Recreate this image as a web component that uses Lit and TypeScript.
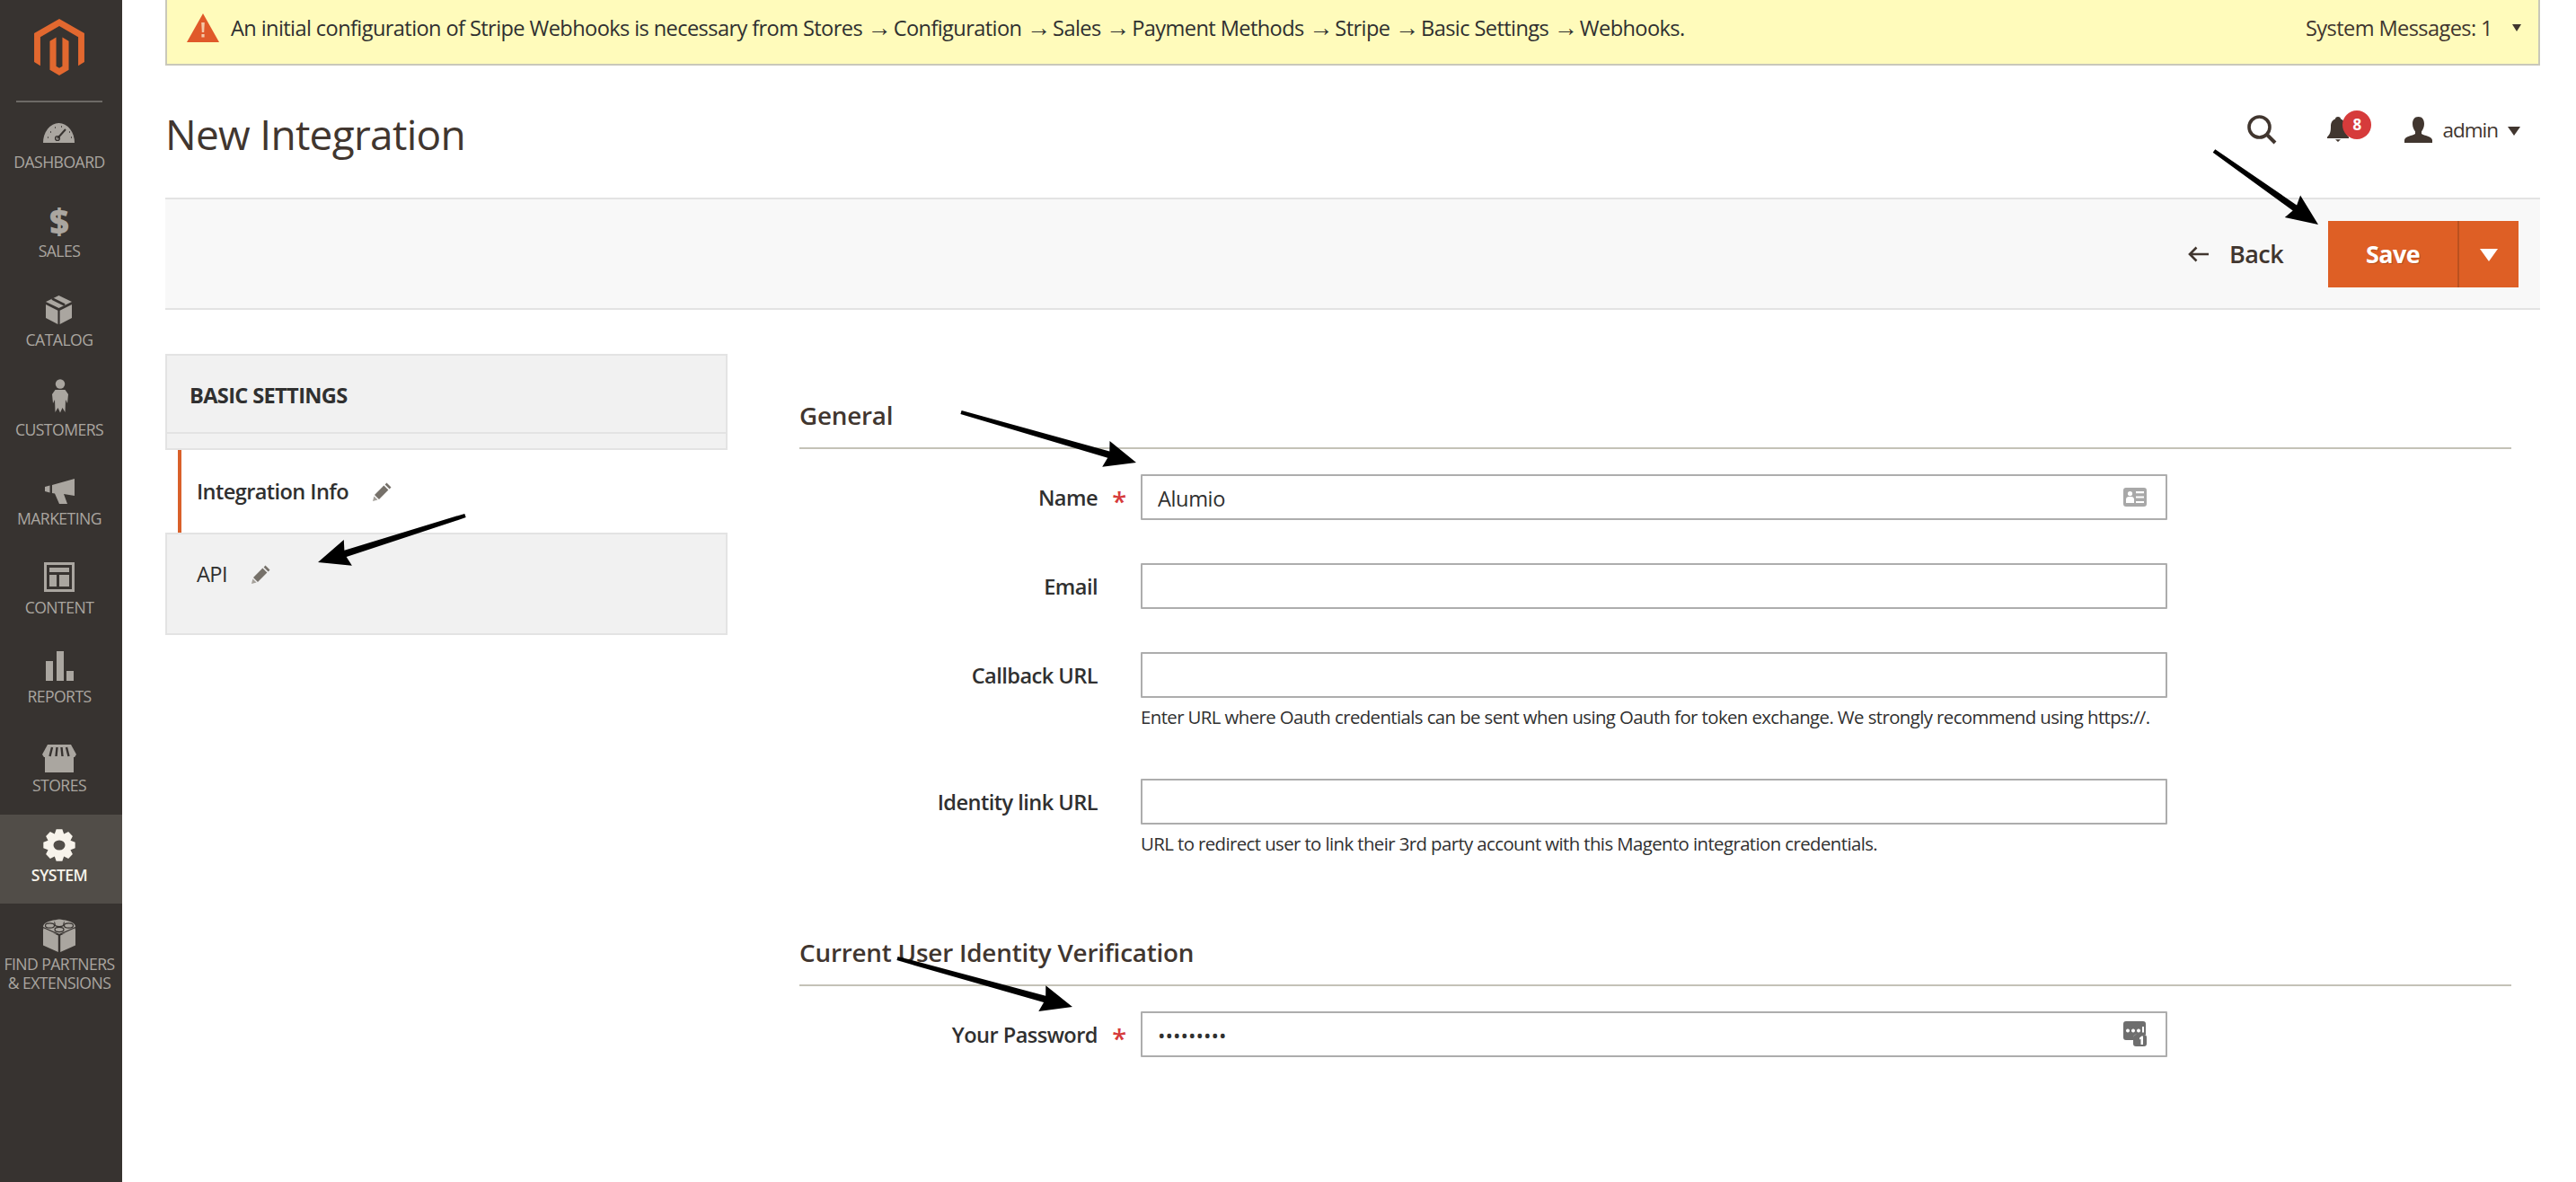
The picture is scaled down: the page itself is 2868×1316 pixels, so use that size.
import { LitElement, css, html, svg } from 'lit';
import { customElement } from 'lit/decorators.js';

// gear outline for the System entry
const gearPath = (cx: number, cy: number, outer: number, inner: number, teeth: number) => {
  const pts: string[] = [];
  const step = (Math.PI * 2) / teeth;
  for (let i = 0; i < teeth; i++) {
    const a = i * step - Math.PI / 2;
    [
      [inner, -0.5],
      [outer, -0.24],
      [outer, 0.24],
      [inner, 0.5],
    ].forEach(([r, k]) => {
      const t = a + k * step;
      pts.push(`${(cx + r * Math.cos(t)).toFixed(2)} ${(cy + r * Math.sin(t)).toFixed(2)}`);
    });
  }
  return `M${pts.join('L')}Z`;
};

const arrowPath = (x1: number, y1: number, x2: number, y2: number) => {
  const len = Math.hypot(x2 - x1, y2 - y1);
  const ux = (x2 - x1) / len;
  const uy = (y2 - y1) / len;
  const nx = -uy;
  const ny = ux;
  const p = (along: number, side: number) =>
    `${(x1 + ux * along + nx * side).toFixed(1)} ${(y1 + uy * along + ny * side).toFixed(1)}`;
  const neck = len - 32;
  return `M${p(0, -2.2)}L${p(neck, -3.8)}L${p(neck - 3, -15)}L${p(len, 0)}L${p(neck - 3, 15)}L${p(neck, 3.8)}L${p(0, 2.2)}Z`;
};

const ARROWS = [
  [2465, 168, 2581, 250],
  [1070, 459, 1265, 515],
  [518, 574, 354, 626],
  [999, 1067, 1194, 1121],
];

const DARK = '#373330';

const PATH_STEPS = ['Stores', 'Configuration', 'Sales', 'Payment Methods', 'Stripe', 'Basic Settings', 'Webhooks.'];

const MENU = [
  {
    label: 'DASHBOARD',
    icon: svg`<path d="M6 36A17.5 22 0 0 1 41 36Z" />
      <path d="M22 31L31 21" stroke="${DARK}" stroke-width="2" />
      <circle cx="22" cy="31" r="2.4" fill="none" stroke="${DARK}" stroke-width="1.4" />
      <path d="M11 30h1M14 24h1M19 19h1M26 18h1M35 24h1M37 30h1" stroke="${DARK}" stroke-width="1.6" />`,
  },
  {
    label: 'SALES',
    glyph: '$',
  },
  {
    label: 'CATALOG',
    icon: svg`<path d="M23.5 8L38 15L23.5 22L9 15Z" />
      <path d="M16 11.5L30 18.5" stroke="${DARK}" stroke-width="2.6" />
      <path d="M9 18L22.4 24.8V40L9 33ZM38 18L24.6 24.8V40L38 33Z" />`,
  },
  {
    label: 'CUSTOMERS',
    icon: svg`<circle cx="25" cy="6.5" r="5.2" />
      <path d="M19.5 13H30.5L34 18L33 28L31 24L30.5 38L27.5 33L25 38.5L22.5 33L19.5 38L19 24L17 28L16 18Z" />`,
  },
  {
    label: 'MARKETING',
    icon: svg`<path d="M8 22L13.5 20.5V28.5L8 27Z" />
      <path d="M16 20L41 13V32L29 30L33 41H24L19 29.5L16 29Z" />`,
  },
  {
    label: 'CONTENT',
    icon: svg`<path fill-rule="evenodd" d="M7 7H41V40H7ZM10 10V37H38V10Z" />
      <path d="M13 13H35V18H13ZM13 21H21V34H13ZM24 21H35V34H24Z" />`,
  },
  {
    label: 'REPORTS',
    icon: svg`<path d="M9 18H17V40H9ZM21 7H29V40H21ZM32 29H40V40H32Z" />`,
  },
  {
    label: 'STORES',
    icon: svg`<path d="M8 24H40V43H8Z" />
      <path d="M11 12H37L43 23L41 26H7L5 23Z" />
      <path d="M16 15L13.5 25M21.5 15L20.5 25M26.5 15L27.5 25M32 15L34.5 25" stroke="${DARK}" stroke-width="2.4" />`,
  },
  {
    label: 'SYSTEM',
    active: true,
    icon: svg`<path d="${gearPath(24, 24, 18, 13.5, 8)}" />
      <ellipse cx="24" cy="24" rx="6.5" ry="5.5" fill="#514d48" />`,
  },
  {
    label: html`FIND PARTNERS<br />&amp; EXTENSIONS`,
    icon: svg`<path d="M6 18L22.800 25.500V44L6 36.500ZM42 18L25.200 25.500V44L42 36.500Z" />
      <ellipse cx="24" cy="16" rx="18" ry="8" />
      <path d="M6 16.500L24 24.500L42 16.500" fill="none" stroke="${DARK}" stroke-width="1.200" />
      <ellipse cx="13.500" cy="14.500" rx="5" ry="2.600" stroke="${DARK}" stroke-width="1.200" />
      <ellipse cx="34.500" cy="14.500" rx="5" ry="2.600" stroke="${DARK}" stroke-width="1.200" />
      <ellipse cx="24" cy="19" rx="5" ry="2.600" stroke="${DARK}" stroke-width="1.200" />
      <path d="M19 10V13A5 2.600 0 0 0 29 13V10" stroke="${DARK}" stroke-width="1.200" />
      <ellipse cx="24" cy="10" rx="5" ry="2.600" />`,
  },
];

const pencil = html`<svg class="pencil" viewBox="0 0 22 22">
  <path d="M15.5 1.5L20.5 6.5L18.6 8.4L13.6 3.4ZM12.4 4.6L17.4 9.6L7 20L2 15Z" fill="#76716a" />
  <path d="M1.4 16.4L5.6 20.6L0 22Z" fill="#a5a19b" />
</svg>`;

@customElement('side-menu')
export class SideMenu extends LitElement {
  render() {
    return html`
      <div class="logo">
        <svg viewBox="0 0 24.4 27.5" width="56" height="63">
          <path fill="#e2682f" d="M12.2 0L24.4 7V21L21.4 22.8V8.8L12.2 3.5L3 8.8V22.8L0 21V7Z" />
          <path fill="#e2682f" d="M13.7 23L12.2 23.9L10.7 23V9L7.6 10.8V24.8L12.2 27.5L16.8 24.8V10.8L13.7 9Z" />
        </svg>
      </div>
      <nav>
        ${MENU.map(
          (m) => html`<a class=${m.active ? 'item active' : 'item'}>
            ${m.glyph
              ? html`<b class="glyph">${m.glyph}</b>`
              : html`<svg viewBox="0 0 48 48" width="48" height="48">${m.icon}</svg>`}
            <span>${m.label}</span>
          </a>`,
        )}
      </nav>
    `;
  }

  static styles = css`
    :host {
      display: block;
      width: 136px;
      flex: none;
      min-height: 1316px;
      background: #373330;
      font-family: 'Open Sans', sans-serif;
    }
    .logo {
      height: 91px;
      margin: 0 22px 0 18px;
      padding-top: 21px;
      box-sizing: content-box;
      border-bottom: 2px solid #6d6a66;
      display: flex;
      justify-content: center;
      width: 96px;
    }
    .logo svg {
      display: block;
    }
    nav {
      display: flex;
      flex-direction: column;
      margin-top: -1px;
    }
    .item {
      height: 99.2px;
      padding: 10px 4px 0 0;
      box-sizing: border-box;
      display: flex;
      flex-direction: column;
      align-items: center;
      color: #aaa6a0;
      fill: #aaa6a0;
      font-size: 17.6px;
      letter-spacing: -0.55px;
      line-height: 21.5px;
      text-align: center;
    }
    .item svg {
      flex: none;
    }
    .glyph {
      height: 48px;
      line-height: 48px;
      font-size: 38px;
      font-weight: 800;
      flex: none;
      letter-spacing: 0;
    }
    .item span {
      margin-top: -1px;
      white-space: nowrap;
    }
    .active {
      background: #514d48;
      color: #f7f3eb;
      fill: #f7f3eb;
      font-weight: 600;
    }
  `;
}

@customElement('app-root')
export class AppRoot extends LitElement {
  render() {
    return html`
      <side-menu></side-menu>
      <main>
        <div class="notice">
          <svg class="warn" viewBox="0 0 36 32" width="36" height="32">
            <path d="M18 0L36 32H0Z" fill="#e0592a" />
            <path d="M16.2 10H19.8L19.2 21H16.8ZM16.4 23H19.6V26.4H16.4Z" fill="#f4c8a8" />
          </svg>
          <span class="msg"
            >An initial configuration of Stripe Webhooks is necessary from
            ${PATH_STEPS.map((s, i) => (i ? html` <span class="arr">→</span> ${s}` : s))}</span
          >
          <span class="sys">System Messages: 1</span>
          <i class="caret sys-caret"></i>
        </div>

        <header>
          <h1>New Integration</h1>
          <div class="actions">
            <svg class="search" viewBox="0 0 33 33" width="33" height="33">
              <circle cx="13.5" cy="13.5" r="11.5" fill="none" stroke="#41362f" stroke-width="3.6" />
              <path d="M21.5 21.5L31 31" stroke="#41362f" stroke-width="4" />
            </svg>
            <div class="bell">
              <svg viewBox="0 0 24 28" width="24" height="28">
                <path d="M12 0C14 0 15 1.2 15 2.6C19 4 20 7.5 20 11C20 17 21 19.5 24 22.5V24H0V22.5C3 19.5 4 17 4 11C4 7.5 5 4 9 2.6C9 1.2 10 0 12 0Z" fill="#41362f" />
                <path d="M9 25.2H15L12 28Z" fill="#41362f" />
              </svg>
              <b class="badge">8</b>
            </div>
            <svg class="user" viewBox="0 0 31 29" width="31" height="29">
              <path d="M15.5 0C20 0 22 3.5 22 8C22 11.5 20.5 14.5 19 16.5V19C22 21 31 22 31 26V29H0V26C0 22 9 21 12 19V16.5C10.5 14.5 9 11.5 9 8C9 3.5 11 0 15.5 0Z" fill="#41362f" />
            </svg>
            <span class="admin">admin</span>
            <i class="caret user-caret"></i>
          </div>
        </header>

        <div class="toolbar">
          <a class="back">
            <svg viewBox="0 0 23 18" width="23" height="18">
              <path d="M9.5 1.5L2 9L9.5 16.5M2.5 9H23" fill="none" stroke="#41362f" stroke-width="2.6" />
            </svg>
            Back
          </a>
          <div class="save">
            <span class="save-main">Save</span>
            <span class="save-more"><i></i></span>
          </div>
        </div>

        <div class="columns">
          <aside class="panel">
            <div class="panel-head">
              <div class="panel-title">BASIC SETTINGS</div>
              <div class="panel-stub"></div>
            </div>
            <div class="tab current"><span>Integration Info</span>${pencil}</div>
            <div class="tab rest"><span>API</span>${pencil}</div>
          </aside>

          <section class="form">
            <h2>General</h2>
            <div class="rows">
              <div class="row">
                <label>Name<em>*</em></label>
                <div class="field">
                  <input value="Alumio" readonly />
                  <svg class="in-icon" viewBox="0 0 26 21" width="26" height="21">
                    <path fill="#a8a8a8" fill-rule="evenodd" d="M3 0H23A3 3 0 0 1 26 3V18A3 3 0 0 1 23 21H3A3 3 0 0 1 0 18V3A3 3 0 0 1 3 0ZM7.5 4A2.6 2.6 0 1 0 7.5 9.2A2.6 2.6 0 1 0 7.5 4ZM3 17H12V13C12 11 10.5 10 9 10H6C4.500 10 3 11 3 13ZM14 4V6.200H23V4ZM14 9.400V11.600H23V9.400ZM14 15V17H23V15Z" />
                  </svg>
                </div>
              </div>
              <div class="row">
                <label>Email<em></em></label>
                <div class="field"><input readonly /></div>
              </div>
              <div class="row">
                <label>Callback URL<em></em></label>
                <div class="field">
                  <input readonly />
                  <p>Enter URL where Oauth credentials can be sent when using Oauth for token exchange. We strongly recommend using https://.</p>
                </div>
              </div>
              <div class="row">
                <label>Identity link URL<em></em></label>
                <div class="field">
                  <input readonly />
                  <p>URL to redirect user to link their 3rd party account with this Magento integration credentials.</p>
                </div>
              </div>
            </div>

            <h2 class="second">Current User Identity Verification</h2>
            <div class="rows">
              <div class="row">
                <label>Your Password<em>*</em></label>
                <div class="field">
                  <input type="password" value="123456789" readonly />
                  <svg class="in-icon pw" viewBox="0 0 26 28" width="26" height="28">
                    <path fill="#6e6e6e" d="M3 0H22A3 3 0 0 1 25 3V15H15A3 3 0 0 0 11 18V21H3A3 3 0 0 1 0 18V3A3 3 0 0 1 3 0Z" />
                    <rect x="11" y="15" width="15" height="13" rx="3" fill="#6e6e6e" />
                    <path fill="#fff" d="M5 8.500a2 2 0 1 0 .01 0ZM11 8.500a2 2 0 1 0 .01 0ZM17 8.500a2 2 0 1 0 .01 0ZM21 6H23V12.500H21ZM18 18.500L20.500 16.500H22V26H19.500V19.500L18 20.500Z" />
                  </svg>
                </div>
              </div>
            </div>
          </section>
        </div>
      </main>

      <svg class="annotations" viewBox="0 0 2868 1316" width="2868" height="1316">
        ${ARROWS.map(([a, b, c, d]) => svg`<path d="${arrowPath(a, b, c, d)}" fill="#000" />`)}
      </svg>
    `;
  }

  static styles = css`
    :host {
      display: flex;
      position: relative;
      min-height: 1316px;
      background: #fff;
      font-family: 'Open Sans', 'Liberation Sans', sans-serif;
      color: #303030;
    }
    main {
      flex: 1;
      min-width: 0;
      padding: 0 40px 0 48px;
    }
    .annotations {
      position: absolute;
      left: 0;
      top: 0;
      pointer-events: none;
    }
    .caret {
      display: block;
      width: 0;
      height: 0;
      border-style: solid;
      border-color: #41362f transparent transparent;
    }

    .notice {
      height: 73px;
      box-sizing: border-box;
      display: flex;
      align-items: center;
      padding: 0 19px 9px 22px;
      background: #fffbbb;
      border: 2px solid #c9c8ba;
      border-top: 0;
      font-size: 23.6px;
      letter-spacing: -0.6px;
    }
    .warn {
      flex: none;
      margin-right: 13px;
    }
    .msg {
      flex: 1;
      white-space: nowrap;
    }
    .arr {
      font-family: 'Liberation Sans', sans-serif;
      font-size: 27px;
      letter-spacing: -3.4px;
      line-height: 1;
    }
    .sys {
      color: #41362f;
      margin-right: 22px;
    }
    .sys-caret {
      border-width: 8px 5.5px 0;
    }

    header {
      height: 147px;
      display: flex;
      align-items: center;
      justify-content: space-between;
      padding-right: 22px;
    }
    h1 {
      margin: 5px 0 0;
      font-size: 46px;
      font-weight: 400;
      color: #41362f;
      letter-spacing: -0.7px;
    }
    .actions {
      display: flex;
      align-items: center;
      margin-top: -5px;
    }
    .search {
      margin-right: 56px;
    }
    .bell {
      position: relative;
      width: 49px;
      height: 28px;
      margin-right: 37px;
    }
    .bell svg {
      display: block;
    }
    .badge {
      position: absolute;
      left: 17px;
      top: -7px;
      width: 32px;
      height: 32px;
      border-radius: 50%;
      background: #d63b3b;
      color: #fff;
      font-size: 17px;
      font-weight: 700;
      line-height: 32px;
      text-align: center;
    }
    .admin {
      margin-left: 11px;
      margin-right: 11px;
      font-size: 22.5px;
      letter-spacing: -1px;
      color: #41362f;
    }
    .user-caret {
      border-width: 10px 7px 0;
      margin-top: 3px;
    }

    .toolbar {
      height: 125px;
      box-sizing: border-box;
      display: flex;
      align-items: center;
      justify-content: flex-end;
      padding-right: 24px;
      background: #f8f8f8;
      border-top: 2px solid #e3e3e3;
      border-bottom: 2px solid #e3e3e3;
    }
    .back {
      display: flex;
      align-items: center;
      gap: 23px;
      margin-right: 50px;
      font-size: 27px;
      letter-spacing: -0.6px;
      font-weight: 600;
      color: #41362f;
    }
    .save {
      display: flex;
      height: 74px;
      background: #de5f25;
      color: #fff;
      font-size: 27px;
      letter-spacing: -0.6px;
      font-weight: 700;
      text-shadow: 1px 1px 0 #b84e1c;
    }
    .save-main {
      width: 144px;
      display: flex;
      align-items: center;
      justify-content: center;
      border-right: 2px solid #b9511f;
    }
    .save-more {
      width: 66px;
      display: flex;
      align-items: center;
      justify-content: center;
    }
    .save-more i {
      width: 0;
      height: 0;
      margin-top: 2px;
      border-style: solid;
      border-width: 14px 10px 0;
      border-color: #fff transparent transparent;
    }

    .columns {
      display: flex;
      gap: 80px;
      margin-top: 49px;
    }
    .panel {
      width: 626px;
      flex: none;
    }
    .panel-head {
      border: 2px solid #e3e3e3;
      background: #f1f1f1;
    }
    .panel-title {
      height: 87px;
      box-sizing: border-box;
      padding: 30px 0 0 25px;
      font-size: 23.6px;
      font-weight: 700;
      letter-spacing: -0.65px;
      line-height: 28px;
      border-bottom: 2px solid #e3e3e3;
    }
    .panel-stub {
      height: 16px;
    }
    .tab {
      display: flex;
      align-items: center;
      font-size: 23.6px;
      letter-spacing: -0.6px;
      gap: 27px;
    }
    .tab span {
      white-space: nowrap;
    }
    .current {
      height: 92px;
      box-sizing: border-box;
      margin-left: 14px;
      padding: 0 0 0 17px;
      border-left: 4px solid #d9602a;
      font-weight: 600;
    }
    .rest {
      height: 114px;
      box-sizing: border-box;
      padding: 0 0 22px 33px;
      background: #f1f1f1;
      border: 2px solid #e3e3e3;
    }
    .pencil {
      width: 22px;
      height: 22px;
      flex: none;
    }

    .form {
      flex: 1;
      min-width: 0;
      padding: 48px 32px 0 0;
    }
    h2 {
      margin: 0 0 28px;
      padding-bottom: 16px;
      height: 40px;
      line-height: 40px;
      font-size: 27.8px;
      letter-spacing: -0.2px;
      font-weight: 600;
      color: #41362f;
      border-bottom: 2px solid #c4c2b7;
      box-sizing: content-box;
    }
    h2.second {
      margin-top: 80px;
    }
    .rows {
      display: flex;
      flex-direction: column;
      gap: 48px;
    }
    .row {
      display: grid;
      grid-template-columns: 380px 1143px;
    }
    label {
      height: 51px;
      display: flex;
      align-items: center;
      justify-content: flex-end;
      font-size: 23.6px;
      letter-spacing: -0.55px;
      font-weight: 600;
    }
    em {
      width: 48px;
      flex: none;
      text-align: center;
      color: #d63b3b;
      font-style: normal;
      font-size: 29px;
      line-height: 20px;
      padding-top: 8px;
      height: 20px;
    }
    .field {
      position: relative;
    }
    input {
      display: block;
      width: 100%;
      height: 51px;
      box-sizing: border-box;
      padding: 2px 17px 0;
      border: 2px solid #adadad;
      border-radius: 1px;
      outline: none;
      background: #fff;
      font-family: 'Open Sans', sans-serif;
      font-size: 23.6px;
      letter-spacing: -0.4px;
      color: #303030;
    }
    input[type='password'] {
      font-size: 22.6px;
      letter-spacing: 0;
    }
    .in-icon {
      position: absolute;
      right: 23px;
      top: 15px;
    }
    .in-icon.pw {
      top: 11px;
    }
    p {
      margin: 0;
      padding: 6px 0 6px;
      font-size: 20.4px;
      letter-spacing: -0.6px;
      line-height: 30px;
      white-space: nowrap;
    }
  `;
}
